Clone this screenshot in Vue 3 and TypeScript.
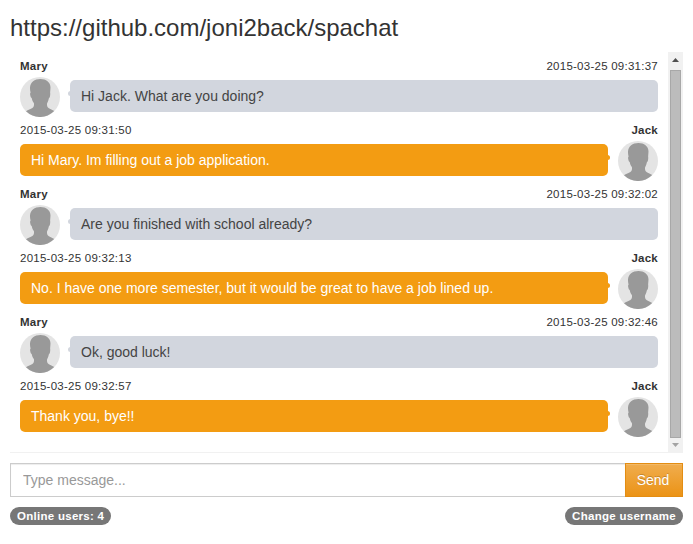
<script setup lang="ts">
interface Message {
  id: number
  user: string
  time: string
  text: string
  own: boolean
}

const messages: Message[] = [
  { id: 1, user: 'Mary', time: '2015-03-25 09:31:37', text: 'Hi Jack. What are you doing?', own: false },
  { id: 2, user: 'Jack', time: '2015-03-25 09:31:50', text: 'Hi Mary. Im filling out a job application.', own: true },
  { id: 3, user: 'Mary', time: '2015-03-25 09:32:02', text: 'Are you finished with school already?', own: false },
  { id: 4, user: 'Jack', time: '2015-03-25 09:32:13', text: 'No. I have one more semester, but it would be great to have a job lined up.', own: true },
  { id: 5, user: 'Mary', time: '2015-03-25 09:32:46', text: 'Ok, good luck!', own: false },
  { id: 6, user: 'Jack', time: '2015-03-25 09:32:57', text: 'Thank you, bye!!', own: true },
]
</script>

<template>
  <main class="page">
    <h3 class="title">https://github.com/joni2back/spachat</h3>
    <section class="chat">
      <div class="messages">
        <article v-for="m in messages" :key="m.id" class="msg" :class="{ own: m.own }">
          <header class="info">
            <strong>{{ m.user }}</strong>
            <time>{{ m.time }}</time>
          </header>
          <div class="body">
            <svg class="avatar" viewBox="0 0 40 40" aria-hidden="true">
              <circle cx="20" cy="20" r="20" fill="#e4e4e4" />
              <path
                fill="#999"
                d="M20.500 2C26 2 30.400 5 30.500 10.500C30.500 12.500 30 14.500 30.200 16C30.400 18 29.900 20.500 28.800 21.500C28.400 23.500 27.800 25 27.100 26.200C26.800 28.400 27.100 30.100 28.500 31C30.200 32.200 32.500 32.700 34.200 34.100A20 20 0 0 1 6 34.300C8 32.800 10.700 32.200 12.400 31C14 29.900 14.200 28.200 13.900 26C12.700 24.700 12.100 23 11.700 20.900C10.600 20.600 10.300 18.500 10.100 17.200C10 16.300 10.300 15.700 10.600 15.600C10.200 14 9.900 12.500 10 10.500C10.300 5.300 14.600 2 20.500 2Z"
              />
            </svg>
            <div class="bubble">{{ m.text }}</div>
          </div>
        </article>
      </div>
      <div class="scrollbar" aria-hidden="true">
        <svg class="arrow" viewBox="0 0 15 18"><path d="M4 10h7L7.500 6z" fill="#505050" /></svg>
        <div class="thumb"></div>
        <svg class="arrow down" viewBox="0 0 15 14"><path d="M4 5h7L7.500 9z" fill="#a3a3a3" /></svg>
      </div>
    </section>
    <form class="compose" @submit.prevent>
      <input class="field" type="text" placeholder="Type message..." />
      <button class="send" type="submit">Send</button>
    </form>
    <footer class="footer">
      <span class="badge">Online users: 4</span>
      <span class="badge">Change username</span>
    </footer>
  </main>
</template>

<style>
body {
  margin: 0;
  background: #fff;
}
</style>

<style scoped>
.page,
.page * {
  box-sizing: border-box;
}
.page {
  padding: 15px 10px 0;
  font: 14px/20px "Liberation Sans", Arial, sans-serif;
  color: #333;
}
.title {
  margin: 0 0 11px;
  font-size: 24px;
  line-height: 26px;
  font-weight: 400;
}
.chat {
  display: flex;
  height: 401px;
  border-bottom: 1px solid #f1f1f1;
}
.messages {
  flex: 1;
  padding: 5px 10px 0;
}
.msg {
  height: 64px;
}
.info {
  display: flex;
  justify-content: space-between;
  height: 20px;
  font-size: 11.5px;
  letter-spacing: 0.25px;
  line-height: 18px;
}
.own .info,
.own .body {
  flex-direction: row-reverse;
}
.body {
  display: flex;
  align-items: flex-start;
  gap: 10px;
}
.avatar {
  display: block;
  flex: none;
  width: 40px;
  height: 40px;
}
.bubble {
  position: relative;
  flex: 1;
  height: 32px;
  margin-top: 3px;
  padding: 6px 11px;
  border-radius: 5px;
  background: #d2d6de;
  color: #444;
}
.bubble::before {
  content: "";
  position: absolute;
  top: 11px;
  left: -2px;
  width: 5px;
  height: 5px;
  border-radius: 50%;
  background: #d2d6de;
}
.own .bubble {
  background: #f39c12;
  color: #fff;
}
.own .bubble::before {
  left: auto;
  right: -2px;
  background: #f39c12;
}
.scrollbar {
  display: flex;
  flex-direction: column;
  width: 15px;
  background: #f1f1f1;
}
.arrow {
  display: block;
  flex: none;
  width: 15px;
  height: 18px;
}
.down {
  height: 14px;
}
.thumb {
  flex: 1;
  margin: 0 2px;
  border: 1px solid #a8a8a8;
  background: #bcbcbc;
}
.compose {
  display: flex;
  margin: 10px 0 0;
}
.field {
  flex: 1;
  min-width: 0;
  height: 34px;
  margin: 0;
  padding: 6px 12px;
  border: 1px solid #ccc;
  border-right: 0;
  border-radius: 0;
  outline: 0;
  background: #fff;
  box-shadow: inset 0 1px 1px rgba(0, 0, 0, 0.075);
  font: inherit;
  color: #555;
}
.field::placeholder {
  color: #999;
  opacity: 1;
}
.send {
  width: 58px;
  height: 34px;
  padding: 0 2px 0 0;
  border: 1px solid #e38d13;
  border-radius: 0;
  background: linear-gradient(#f0ad4e, #eb9316);
  box-shadow: inset 0 1px 0 rgba(255, 255, 255, 0.15);
  text-shadow: 0 -1px 0 rgba(0, 0, 0, 0.2);
  font: inherit;
  color: #fff;
}
.footer {
  display: flex;
  justify-content: space-between;
  margin-top: 10px;
}
.badge {
  height: 18px;
  padding: 3px 7px;
  border-radius: 10px;
  background: #777;
  color: #fff;
  font-size: 11.5px;
  letter-spacing: 0.28px;
  font-weight: 700;
  line-height: 12px;
}
</style>
